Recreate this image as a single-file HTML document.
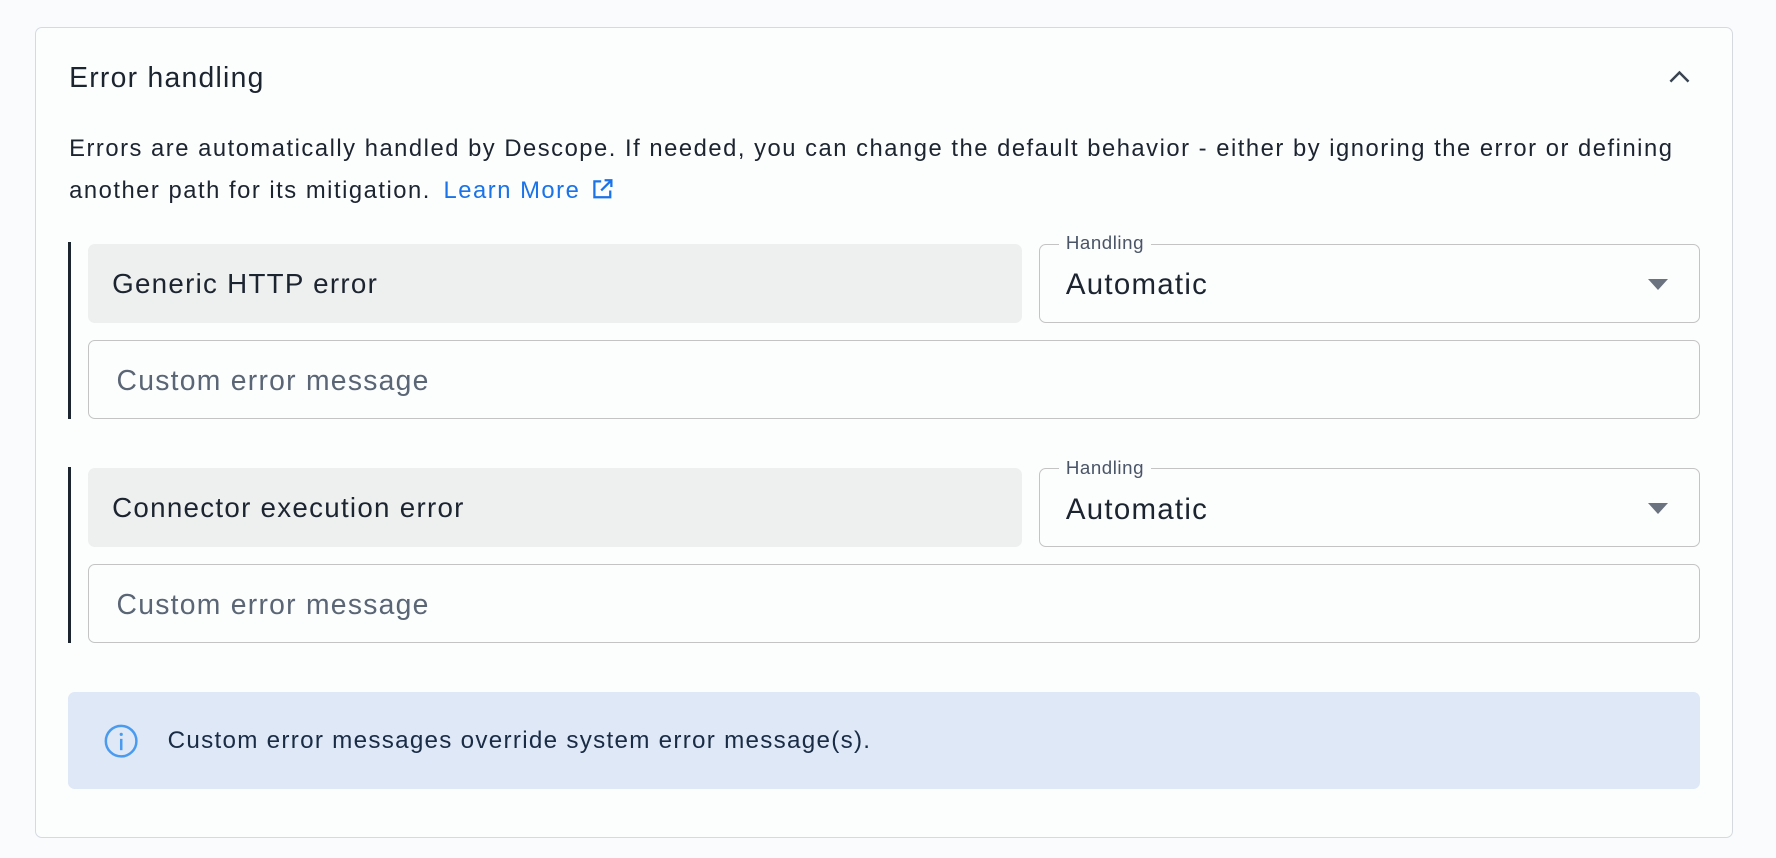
<!DOCTYPE html>
<html><head><style>
html,body{margin:0;padding:0;background:#fafbfc;overflow:hidden}
body{width:1776px;height:858px;font-family:"Liberation Sans",sans-serif}
#z{zoom:1.1327;position:relative;width:1568px;height:757px;letter-spacing:0.07em}
.a{position:absolute}
.card{left:31px;top:24px;width:1497px;height:714px;border:1.5px solid #d5dae1;border-radius:6px;background:#fcfdfd}
.t{color:#1c2430}
.bar{width:3px;background:#1c2430;left:60px}
.gray{left:78px;width:824px;height:70px;background:#eeefef;border-radius:6px;font-size:24.5px;line-height:70px;text-indent:21px;color:#1c2430}
.sel{left:917px;width:582px;height:68px;border:1.5px solid #c4c4c4;border-radius:6px}
.lab{left:935px;font-size:16.5px;color:#4a5568;background:#fcfdfd;padding:0 6px;line-height:18px;letter-spacing:0.03em}
.val{left:941px;font-size:26px;color:#1c2430}
.tri{width:0;height:0;border-left:9px solid transparent;border-right:9px solid transparent;border-top:10px solid #6b7280;left:1455px}
.inp{left:78px;width:1421px;height:68px;border:1.5px solid #c4c4c4;border-radius:6px;font-size:25px;color:#5a6675;line-height:70px;text-indent:24px}
</style></head><body><div id="z">
<div class="a card"></div>
<div class="a t" style="left:61px;top:54px;font-size:25px">Error handling</div>
<svg class="a" style="left:1472px;top:60px" width="22" height="16" viewBox="0 0 22 16"><path d="M3 12 L11 4 L19 12" fill="none" stroke="#3a4350" stroke-width="2.2"/></svg>
<div class="a t" style="left:61px;top:113px;width:1445px;font-size:21px;line-height:37px;letter-spacing:0.064em">Errors are automatically handled by Descope. If needed, you can change the default behavior - either by ignoring the error or defining another path for its mitigation. <span style="color:#1a73e8;margin-left:4px">Learn More</span> <svg width="20" height="20" viewBox="0 0 20 20" style="vertical-align:-2px;margin-left:2px"><path d="M9 3H3v14h14v-6M12 2h6v6M18 2 9 11" fill="none" stroke="#1a73e8" stroke-width="2"/></svg></div>

<div class="a bar" style="top:214px;height:156px"></div>
<div class="a gray" style="top:215px">Generic HTTP error</div>
<div class="a sel" style="top:215px"></div>
<div class="a lab" style="top:206px">Handling</div>
<div class="a val" style="top:237px">Automatic</div>
<div class="a tri" style="top:246px"></div>
<div class="a inp" style="top:300px">Custom error message</div>

<div class="a bar" style="top:412px;height:156px"></div>
<div class="a gray" style="top:413px">Connector execution error</div>
<div class="a sel" style="top:413px"></div>
<div class="a lab" style="top:404px">Handling</div>
<div class="a val" style="top:435px">Automatic</div>
<div class="a tri" style="top:444px"></div>
<div class="a inp" style="top:498px">Custom error message</div>

<div class="a" style="left:60px;top:611px;width:1441px;height:86px;background:#dee8f6;border-radius:6px"></div>
<svg class="a" style="left:91px;top:638px" width="32" height="32" viewBox="0 0 32 32"><circle cx="16" cy="16" r="13.5" fill="none" stroke="#4a9bef" stroke-width="2.2"/><rect x="15" y="14" width="2.2" height="10" fill="#4a9bef"/><circle cx="16.1" cy="10" r="1.4" fill="#4a9bef"/></svg>
<div class="a" style="left:148px;top:642px;font-size:21.4px;color:#1a2b45">Custom error messages override system error message(s).</div>
</div></body></html>
